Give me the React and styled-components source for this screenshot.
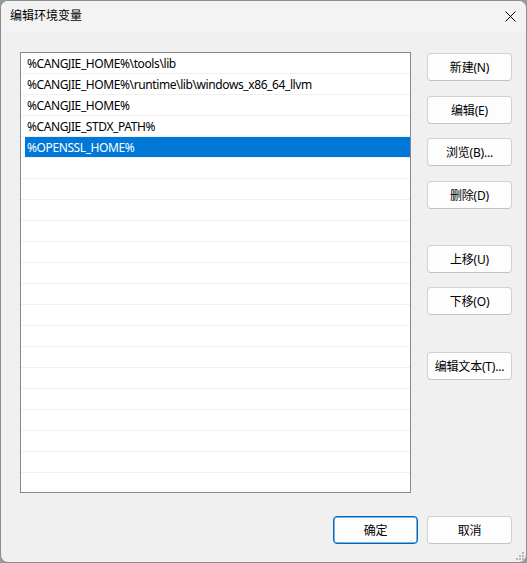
import React from "react";
import styled, { createGlobalStyle } from "styled-components";

const GlobalStyle = createGlobalStyle`
  html, body {
    margin: 0;
    padding: 0;
    background: #9a9a9a;
  }
  body {
    font-family: "Noto Sans", "Noto Sans CJK SC", sans-serif;
    font-size: 12px;
    color: #000;
  }
`;

const Window = styled.div`
  position: relative;
  width: 527px;
  height: 563px;
  box-sizing: border-box;
  border: 1px solid #8c8c8c;
  border-radius: 8px;
  background: #f0f0f0;
  overflow: hidden;
  display: flex;
  flex-direction: column;
`;

const TitleBar = styled.div`
  height: 30px;
  flex-shrink: 0;
  display: flex;
  align-items: center;
  justify-content: space-between;
  padding: 0 10px 0 9px;
  background: #f3f3f3;
  font-size: 12px;
`;

const Title = styled.span`
  margin-top: -2px;
`;

const Body = styled.div`
  flex: 1;
  display: flex;
  flex-direction: column;
  padding: 21px 14px 0 19px;
`;

const Main = styled.div`
  display: flex;
  gap: 16px;
`;

const List = styled.div`
  width: 391px;
  height: 441px;
  box-sizing: border-box;
  border: 1px solid #828790;
  background: #fff;
  overflow: hidden;
`;

const Row = styled.div`
  height: 20px;
  border-bottom: 1px solid #f0f0f0;
  display: flex;
  padding-left: 4px;
`;

const Cell = styled.div`
  flex: 1;
  display: flex;
  align-items: center;
  padding-left: 2px;
  padding-top: 1px;
  white-space: nowrap;
  letter-spacing: -0.4px;
  background: ${(p) => (p.$selected ? "#0078d7" : "transparent")};
  color: ${(p) => (p.$selected ? "#fff" : "#000")};
`;

const Side = styled.div`
  display: flex;
  flex-direction: column;
  width: 85px;
`;

const Button = styled.button`
  width: 85px;
  height: 28px;
  margin-top: ${(p) => p.$gap || 0}px;
  box-sizing: border-box;
  border: 1px solid ${(p) => (p.$primary ? "#0067c0" : "#d1d1d1")};
  border-bottom-color: ${(p) => (p.$primary ? "#0067c0" : "#c2c2c2")};
  border-radius: 4px;
  background: #fdfdfd;
  font-family: "Noto Sans", "Noto Sans CJK SC", sans-serif;
  font-size: 12px;
  letter-spacing: -0.2px;
  color: #000;
  padding: 0;
  box-shadow: ${(p) => (p.$primary ? "inset 0 0 0 0.5px #0067c0" : "none")};
`;

const Footer = styled.div`
  display: flex;
  justify-content: flex-end;
  gap: 9px;
  margin-top: 23px;
`;

const Grip = styled.svg`
  position: absolute;
  right: 2px;
  bottom: 2px;
`;

const CloseIcon = () => (
  <svg width="11" height="11" viewBox="0 0 11 11">
    <path d="M0.5 0.5 L10.5 10.5 M10.5 0.5 L0.5 10.5" stroke="#000" strokeWidth="1" />
  </svg>
);

const entries = [
  "%CANGJIE_HOME%\\tools\\lib",
  "%CANGJIE_HOME%\\runtime\\lib\\windows_x86_64_llvm",
  "%CANGJIE_HOME%",
  "%CANGJIE_STDX_PATH%",
  "%OPENSSL_HOME%",
];

const rows = [...entries, ...Array(17).fill("")];

const sideButtons = [
  { label: "新建(N)", gap: 1 },
  { label: "编辑(E)", gap: 15 },
  { label: "浏览(B)...", gap: 14 },
  { label: "删除(D)", gap: 15 },
  { label: "上移(U)", gap: 36 },
  { label: "下移(O)", gap: 14 },
  { label: "编辑文本(T)...", gap: 37 },
];

export default function App() {
  return (
    <>
      <GlobalStyle />
      <Window>
        <TitleBar>
          <Title>编辑环境变量</Title>
          <CloseIcon />
        </TitleBar>
        <Body>
          <Main>
            <List>
              {rows.map((text, i) => (
                <Row key={i}>
                  <Cell $selected={i === 4}>{text}</Cell>
                </Row>
              ))}
            </List>
            <Side>
              {sideButtons.map((b) => (
                <Button key={b.label} $gap={b.gap}>
                  {b.label}
                </Button>
              ))}
            </Side>
          </Main>
          <Footer>
            <Button $primary>确定</Button>
            <Button>取消</Button>
          </Footer>
        </Body>
        <Grip width="9" height="9" viewBox="0 0 9 9">
          <rect x="7" y="1" width="2" height="2" fill="#b8b8b8" />
          <rect x="4" y="4" width="2" height="2" fill="#b8b8b8" />
          <rect x="7" y="4" width="2" height="2" fill="#b8b8b8" />
          <rect x="1" y="7" width="2" height="2" fill="#b8b8b8" />
          <rect x="4" y="7" width="2" height="2" fill="#b8b8b8" />
          <rect x="7" y="7" width="2" height="2" fill="#b8b8b8" />
        </Grip>
      </Window>
    </>
  );
}
